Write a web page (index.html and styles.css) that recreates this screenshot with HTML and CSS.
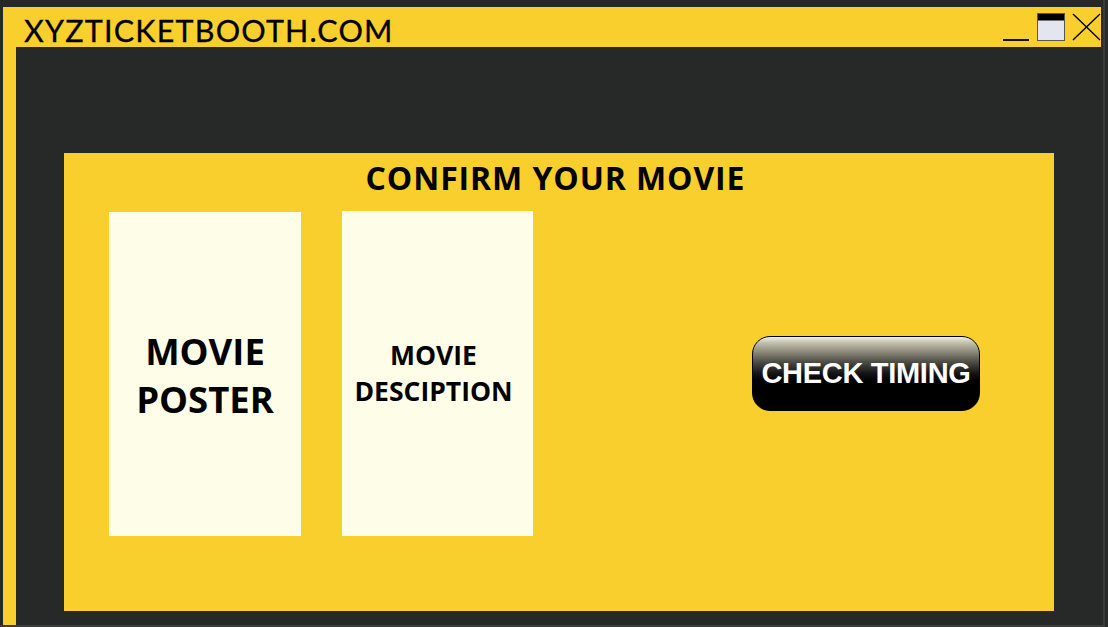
FILE: index.html
```html
<!DOCTYPE html>
<html lang="en">
<head>
<meta charset="utf-8">
<title>XYZTICKETBOOTH.COM</title>
<link rel="stylesheet" href="styles.css">
</head>
<body>
<div class="screen">
  <div class="window">
    <header class="titlebar">
      <div class="site-title">XYZTICKETBOOTH.COM</div>
      <svg class="controls" width="101" height="40" viewBox="0 0 101 40" aria-hidden="true">
        <line x1="3" y1="33" x2="29" y2="33" stroke="#111" stroke-width="2"/>
        <rect x="37.5" y="6.5" width="27" height="27" fill="#e4e6ef" stroke="#555" stroke-width="1"/>
        <rect x="38" y="7" width="26" height="6.5" fill="#000"/>
        <line x1="73" y1="7" x2="100" y2="33" stroke="#000" stroke-width="1.4"/>
        <line x1="100" y1="7" x2="73" y2="33" stroke="#000" stroke-width="1.4"/>
      </svg>
    </header>
    <div class="window-body">
      <div class="stripe"></div>
      <main class="content">
        <section class="panel">
          <h1 class="panel-title">CONFIRM YOUR MOVIE</h1>
          <div class="row">
            <div class="card card-poster">MOVIE<br>POSTER</div>
            <div class="card card-desc">MOVIE<br>DESCIPTION</div>
            <button class="timing-btn" type="button">CHECK TIMING</button>
          </div>
        </section>
      </main>
    </div>
  </div>
</div>
</body>
</html>
```

FILE: styles.css
```css
* { box-sizing: border-box; }

html, body {
  margin: 0;
  padding: 0;
  background: #272828;
}

.screen {
  width: 1105px;
  height: 627px;
  padding: 7px 0 0 3px;
  border-right: 2px solid #3a3b3b;
  border-bottom: 2px solid #3a3b3b;
  background: #272828;
}

.window {
  width: 1100px;
  height: 618px;
  display: flex;
  flex-direction: column;
}

.titlebar {
  height: 40px;
  width: 1098px;
  background: #f8cf2c;
  display: flex;
  align-items: flex-start;
  padding-left: 21px;
}

.site-title {
  font-family: "Lato", "DejaVu Sans", sans-serif;
  font-weight: 400;
  font-size: 30.5px;
  letter-spacing: 1.2px;
  line-height: 1;
  color: #000;
  margin-top: 8px;
  -webkit-text-stroke: 0.3px #000;
}

.controls {
  display: block;
  margin-left: auto;
}

.window-body {
  flex: 1;
  display: flex;
}

.stripe {
  width: 13px;
  background: #f8cf2c;
}

.content {
  flex: 1;
  background: #272828;
  padding: 106px 49px 14px 48px;
}

.panel {
  width: 990px;
  height: 458px;
  background: #f8cf2c;
  padding-top: 9px;
}

.panel-title {
  margin: 0;
  font-family: "Open Sans", "Liberation Sans", sans-serif;
  font-weight: 700;
  font-size: 32px;
  letter-spacing: 0.9px;
  line-height: 32px;
  text-align: center;
  padding-right: 7px;
  color: #000;
}

.row {
  display: flex;
  align-items: center;
  margin-top: 17px;
  padding-left: 45px;
}

.card {
  background: #fefee8;
  display: flex;
  align-items: center;
  justify-content: center;
  text-align: center;
  font-family: "Open Sans", "Liberation Sans", sans-serif;
  font-weight: 700;
  color: #000;
}

.card-poster {
  width: 192px;
  height: 324px;
  font-size: 36.5px;
  line-height: 48px;
  padding-top: 2px;
}

.card-desc {
  width: 191px;
  height: 325px;
  margin-left: 41px;
  font-size: 26.5px;
  line-height: 36px;
  padding-bottom: 2px;
  padding-right: 8px;
}

.timing-btn {
  margin-left: 219px;
  width: 228px;
  height: 75px;
  border: 1px solid #000;
  border-radius: 18px;
  background: linear-gradient(to bottom, #f2efe2 0%, #c2bfae 8%, #8e8b7c 20%, #4a4943 35%, #141414 50%, #000 60%, #000 100%);
  color: #fff;
  font-family: "Liberation Sans", "Arial", sans-serif;
  font-weight: 700;
  font-size: 29px;
  letter-spacing: -0.3px;
  padding: 0;
  cursor: pointer;
}
```
